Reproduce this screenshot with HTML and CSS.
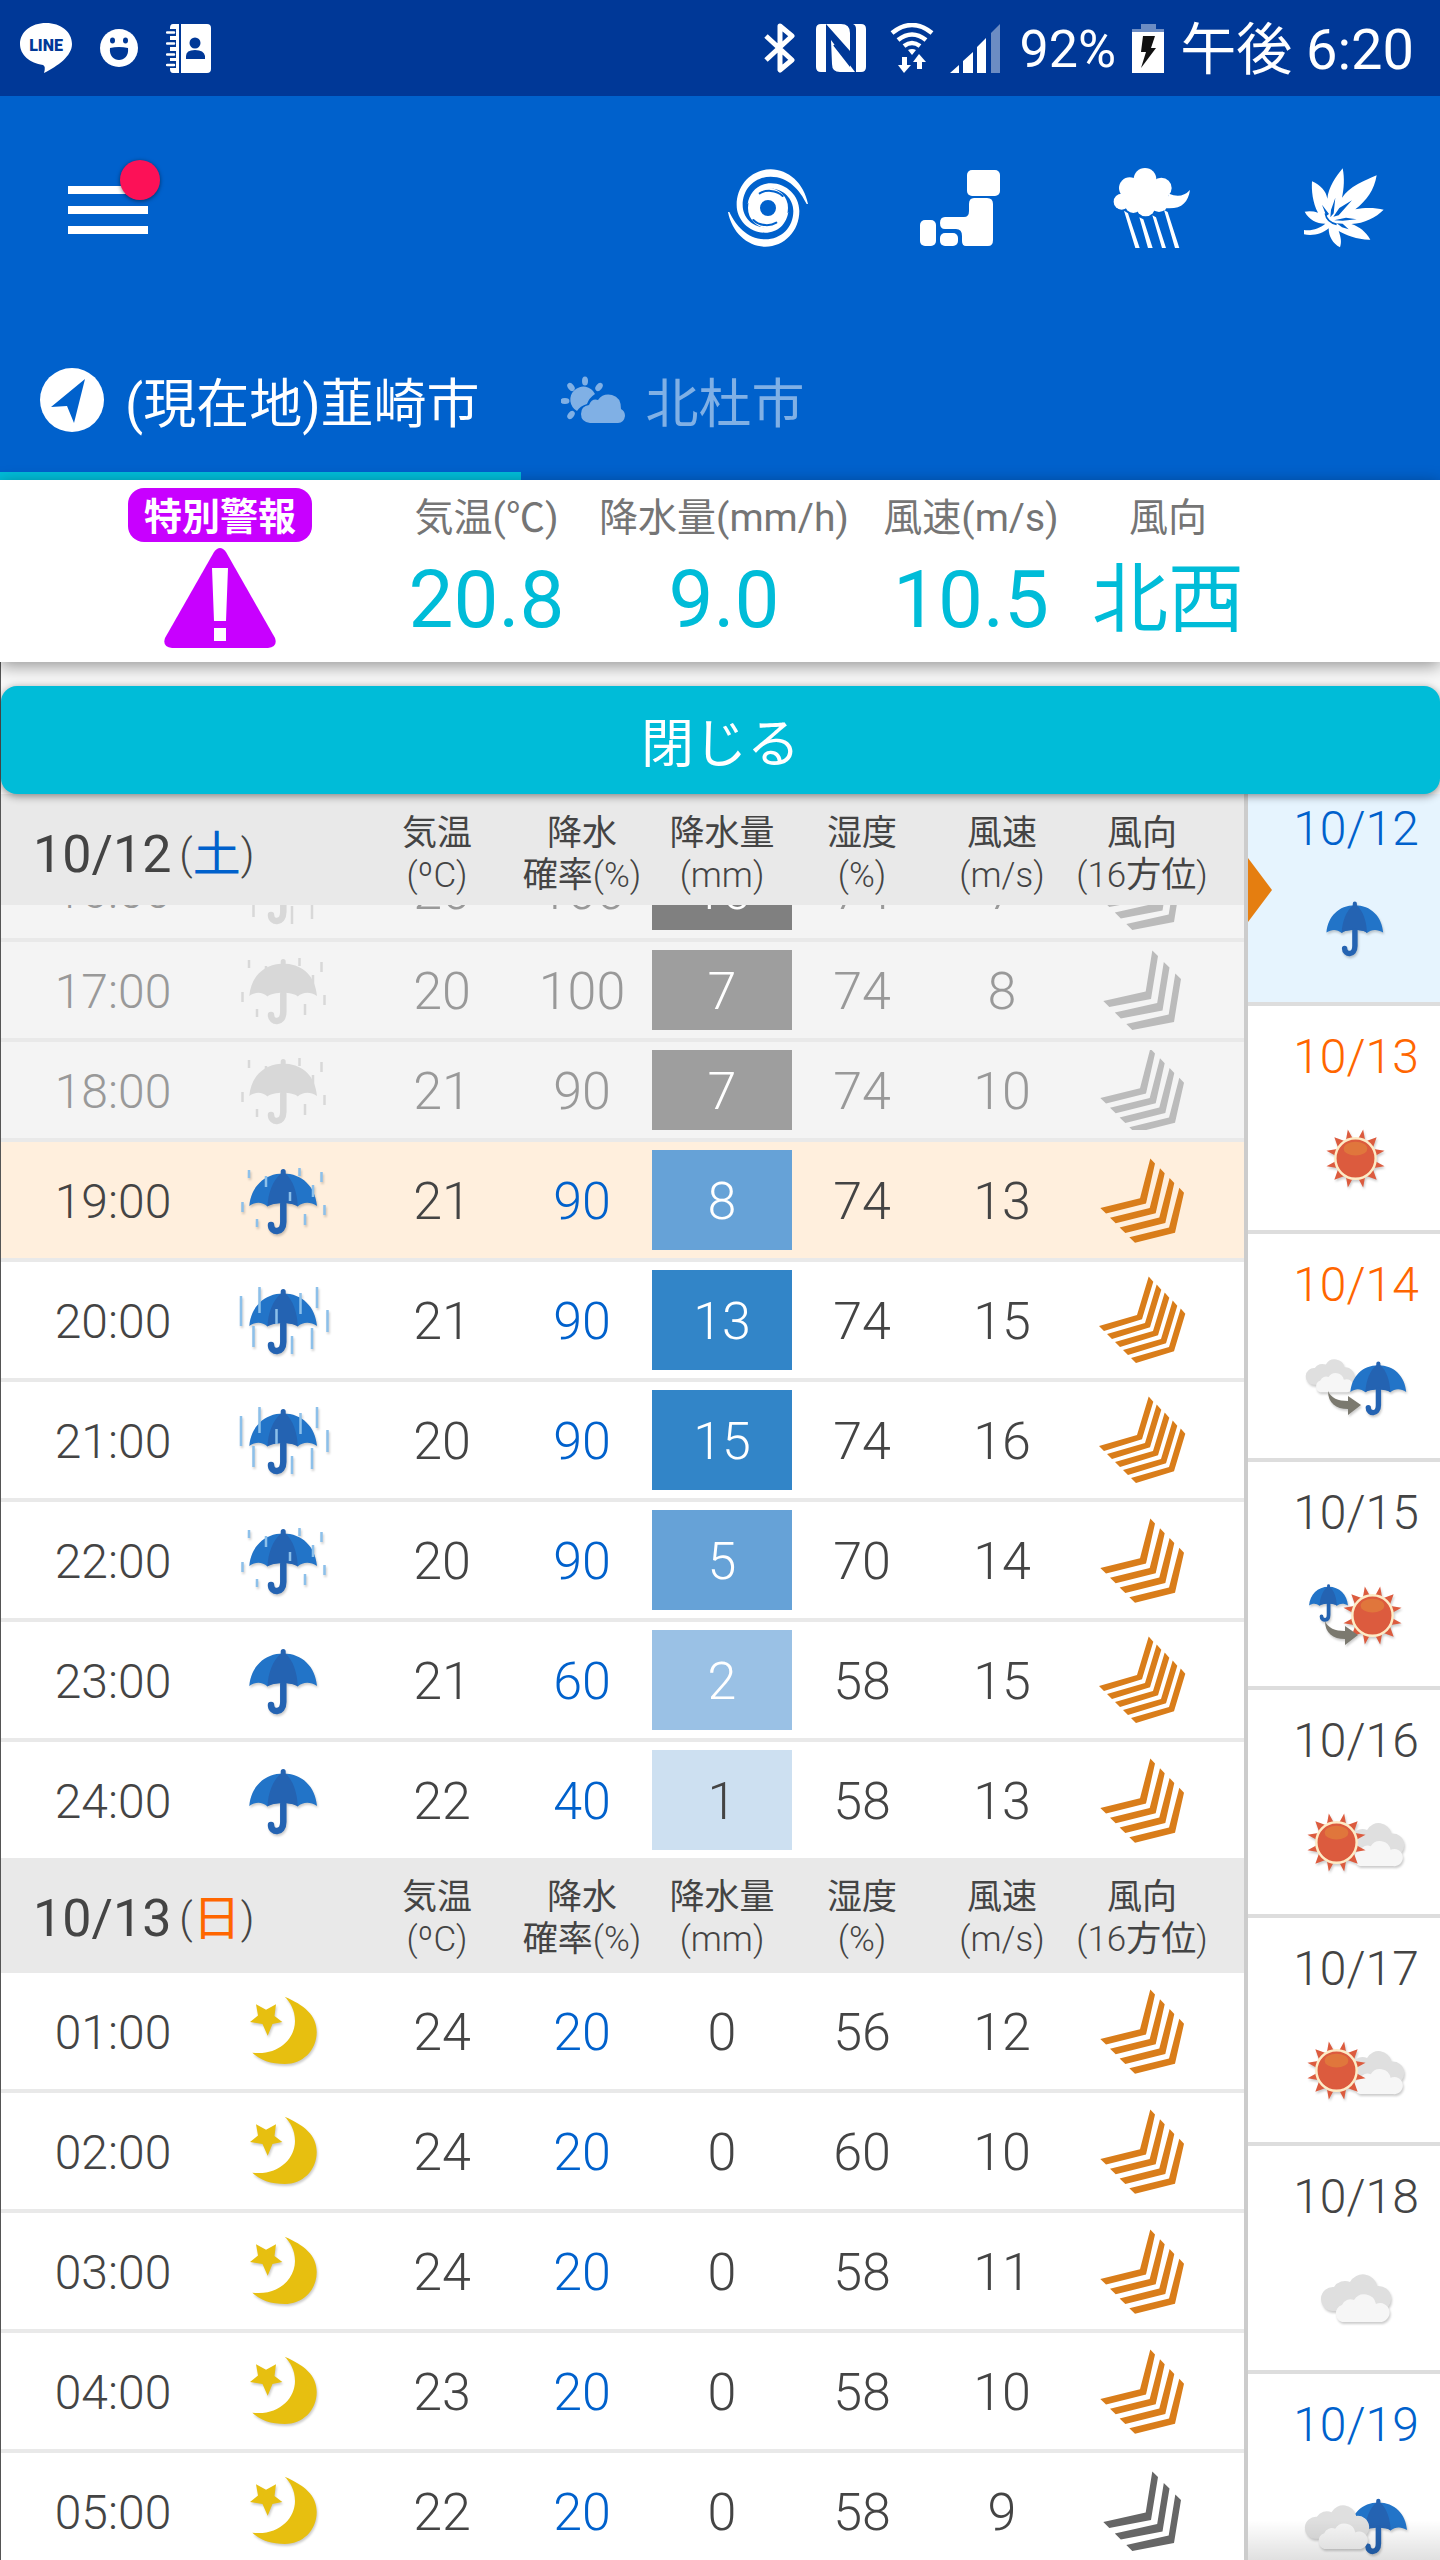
FILE: index.html
```html
<!DOCTYPE html>
<html lang="ja">
<head>
<meta charset="utf-8">
<meta name="viewport" content="width=device-width, initial-scale=1">
<title>韮崎市の天気</title>
<link rel="stylesheet" href="styles.css">
</head>
<body>
<svg class="sprite" aria-hidden="true">
  <symbol id="umbrella" viewBox="0 0 80 80" overflow="visible">
    <path fill="#2274c8" d="M5.300 46C7 27 20 13.500 39.200 13.500S71.500 27 73 46C66 41.500 59 42 53.700 46.500C49 41.500 29 41.500 23.500 46.500C18 42 12 41.500 5.300 46Z"/>
    <path fill="#2463b2" d="M23.500 46.500C24 33 29 20 36.700 13.700V11.500a2.500 2.500 0 0 1 5 0V13.700C49 20 53.500 33 53.700 46.500C49 42 29 42 23.500 46.500Z"/>
    <path fill="none" stroke="#2463b2" stroke-width="6.500" stroke-linecap="round" d="M39.300 44V62C39.300 74 27 73 27 65"/>
  </symbol>
  <symbol id="umbrella-past" viewBox="0 0 80 80" overflow="visible">
    <path fill="#d8d8d8" d="M5.300 46C7 27 19 15 36.700 13.700V11.500a2.500 2.500 0 0 1 5 0V13.700C60 15 71.500 27 73 46C66 41.500 59 42 53.700 46.500C49 41.500 29 41.500 23.500 46.500C18 42 12 41.500 5.300 46Z"/>
    <path fill="none" stroke="#d8d8d8" stroke-width="6.500" stroke-linecap="round" d="M39.300 44V62C39.300 74 27 73 27 65"/>
  </symbol>
  <symbol id="drops" viewBox="0 0 80 80" overflow="visible">
    <path fill="none" stroke="currentColor" stroke-width="2.500" d="M5 10v8M22 16v11M55.500 8v8M77.500 12v10M69 25v12M46 32v9M-1.500 42v10M80.500 45v10M13 59v8M61 54v11"/>
  </symbol>
  <symbol id="downpour" viewBox="0 0 80 80" overflow="visible">
    <path fill="none" stroke="currentColor" stroke-width="2.500" d="M-3 16v30M15.500 7v26M56.500 13v21M73 7v21M83.500 30v22M32.500 29v15M9.500 46v21M68 48v21M48 56v18"/>
  </symbol>
  <symbol id="moon" viewBox="0 0 80 80">
    <path fill="#e7bf10" d="M12 13.300L22 18.700L32 13.300L30.500 25L38.300 31L28.500 33L23.700 44.700L18.500 33L6 31L14 24.500Z"/>
    <path fill="#e7bf10" d="M40.700 5.700C60 14 72.700 24 72.700 41C72.700 60 58 73 41 73C27 73 16 69 8.300 61.700C34 65 51 48 51 30C51 19 46 11 40.700 5.700Z"/>
  </symbol>
  <symbol id="sun" viewBox="-31 -31 62 62">
    <path fill="#dc5b3e" d="M7.800-29.500L10-17H1ZM21.500-21.500L17-9L9-17ZM29.500-7.800L17-1V-10ZM29.500 7.800L17 10V1ZM21.500 21.500L9 17L17 9ZM7.800 29.500L1 17H10ZM-7.800 29.500L-10 17H-1ZM-21.500 21.500L-17 9L-9 17ZM-29.500 7.800L-17 1V10ZM-29.500-7.800L-17-10V-1ZM-21.500-21.500L-9-17L-17-9ZM-7.800-29.500L-1-17H-10Z"/>
    <circle r="20.500" fill="#dc5b3e" stroke="#fdebc6" stroke-width="2.500"/>
    <ellipse cy="-10" rx="12" ry="7" fill="#e0763c"/>
  </symbol>
  <symbol id="cloud" viewBox="0 0 72 52">
    <path fill="#dfdfdf" d="M12 40A12 12 0 1 1 14 16A13 13 0 0 1 30 11A14.500 14.500 0 0 1 57 15A12.500 12.500 0 1 1 60 40Z"/>
    <path fill="#f6f6f6" d="M22 51A9 9 0 0 1 22 34A9 9 0 0 1 34 29A12 12 0 0 1 56 33A9.500 9.500 0 1 1 59 51Z"/>
  </symbol>
  <symbol id="then" viewBox="0 0 34 26" overflow="visible">
    <path fill="#7b796f" d="M0 0C3 7 10 10 20 10V5L33 14L20 24V18C8 18 0 12 0 0Z"/>
  </symbol>
  <symbol id="wind3" viewBox="0 8 88 100" preserveAspectRatio="xMidYMid slice">
    <path id="w3" d="M54.300 18.400L60 24L53 67L11.300 75L5.300 69L47.700 59.500Z"/>
    <use href="#w3" x="11.500" y="11.500"/><use href="#w3" x="23" y="23"/>
  </symbol>
  <symbol id="wind4" viewBox="0 8 88 100" preserveAspectRatio="xMidYMid slice">
    <path id="w4" d="M52.300 16.600L57 21.600L48 61.600L8 71.600L2.300 66L42 56.200Z"/>
    <use href="#w4" x="9.700" y="9.700"/><use href="#w4" x="19.300" y="19.400"/><use href="#w4" x="29" y="29.200"/>
  </symbol>
  <symbol id="wind5" viewBox="0 8 88 100" preserveAspectRatio="xMidYMid slice">
    <path id="w5" d="M50.700 14.400L55.300 19.800L44 57.300L6 69L1 64L39 53Z"/>
    <use href="#w5" x="8" y="8"/><use href="#w5" x="16" y="16"/><use href="#w5" x="24" y="24"/><use href="#w5" x="32" y="32"/>
  </symbol>
</svg>

<div class="app">
  <div class="status">
    <div class="status-group">
      <svg width="52" height="50" viewBox="0 0 52 50"><path fill="#fff" d="M26 0C11 0 0 9 0 21C0 32 10 40 23 42Q26 43 24 50C38 43 52 33 52 21C52 9 41 0 26 0Z"/><text x="26" y="28" class="line-text">LINE</text></svg>
      <svg width="38" height="38" viewBox="0 0 38 38"><circle cx="19" cy="19" r="19" fill="#fff"/><g fill="#003897"><ellipse cx="12.500" cy="11.500" rx="2.500" ry="3"/><ellipse cx="25.500" cy="11.500" rx="2.500" ry="3"/><path d="M10 19Q19 17 28 19C29 27 24 31 19 31S9 27 10 19Z"/></g></svg>
      <svg width="45" height="49" viewBox="0 0 45 49"><path fill="#fff" d="M7 0H13V49H7Q4 49 4 45V4Q4 0 7 0ZM15 0H41Q45 0 45 4V45Q45 49 41 49H15Z"/><g fill="#003897"><path d="M3 5h7v7H3zM3 16h7v7H3zM3 27h7v7H3zM3 37h7v7H3z"/><circle cx="29" cy="19" r="5.500"/><path d="M20 35V32Q20 26 29 26T39 32V35Z"/></g><path stroke="#fff" stroke-width="2.500" stroke-linecap="round" d="M1 8.500h7M1 19.500h7M1 30.500h7M1 41h7"/></svg>
    </div>
    <div class="status-group status-right">
      <svg width="32" height="50" viewBox="0 0 32 50"><path fill="none" stroke="#fff" stroke-width="5" stroke-linejoin="round" d="M2 13L28 37L16 47V3L28 13L2 37"/></svg>
      <svg width="50" height="50" viewBox="0 0 50 50"><path fill="#fff" d="M5 1H25Q34 1 34 10V28L10 1V49H5Q0 49 0 44V6Q0 1 5 1ZM37 1H45Q50 1 50 6V44Q50 49 45 49H40V6Q40 2 37 1ZM15 17L39 49H24Q16 49 16 41Z"/><path stroke="#003897" stroke-width="2" fill="none" d="M18 22L33 41V32L17 15"/></svg>
      <svg class="wifi" width="44" height="50" viewBox="0 0 44 50"><g fill="none" stroke="#fff" stroke-width="4.500"><path d="M2 10Q22-6 42 10M8 17Q22 6 36 17M14 23Q22 17 30 23"/></g><path fill="#fff" d="M18 27Q22 25 26 27L22 32ZM12 34h5v8h4l-7 8l-6-8h4ZM27 46h5v-7h4l-7-8l-6 8h4Z"/></svg>
      <svg width="50" height="49" viewBox="0 0 50 49"><path fill="#fff" d="M0 49L9 41V49ZM13 37L23 28V49H13ZM27 23L36 14V49H27Z"/><path fill="#6c8cc3" d="M41 9L50 0V49H41Z"/></svg>
      <span class="level">92%</span>
      <svg class="battery" width="32" height="49" viewBox="0 0 32 49"><path fill="#6c8cc3" d="M9 0h15v5h8v4H0V5h9z"/><path fill="#fff" d="M0 8h32v41H0z"/><path fill="#111" d="M11 12H23L19 24H24L9 44L14 28H9Z"/></svg>
      <span class="clock">午後 6:20</span>
    </div>
  </div>

  <header class="header">
    <div class="toolbar">
      <button class="icon-btn menu" aria-label="メニュー"><i></i><i></i><i></i><b class="dot"></b></button>
      <button class="icon-btn push" aria-label="台風"><svg width="80" height="80" viewBox="24 24 240 240">
        <circle cx="144" cy="144" r="42" fill="none" stroke="#fff" stroke-width="36"/>
        <g id="arm"><path fill="#fff" d="M264 132C252 70 205 28 152 28C95 28 50 75 50 135C50 180 88 218 135 218C175 218 200 190 205 155L192 172C180 193 160 202 135 202C98 202 68 172 68 135C68 85 105 50 152 50C205 50 240 90 260 132Z"/>
        <path fill="none" stroke="#0061cc" stroke-width="6" stroke-linecap="round" d="M119 100C135 90 168 88 188 108"/></g>
        <use href="#arm" transform="rotate(180 144 144)"/></svg></button>
      <button class="icon-btn" aria-label="地震"><svg width="80" height="80" viewBox="0 0 80 80"><g fill="#fff"><rect x="47" y="2" width="33" height="26" rx="5"/><rect y="52" width="16" height="26" rx="5"/><rect x="20" y="65" width="18" height="13" rx="5"/><path d="M49 36Q49 30 54 30H67Q73 30 73 36V72Q73 78 68 78H46Q42 78 42 73V68Q42 61 36 61H25Q20 61 20 55T25 49H44Q49 49 49 43Z"/></g></svg></button>
      <button class="icon-btn" aria-label="大雨"><svg width="80" height="80" viewBox="24 24 240 240"><g fill="#fff"><circle cx="123" cy="58" r="34"/><circle cx="77" cy="84" r="32"/><circle cx="172" cy="84" r="31"/><circle cx="53" cy="125" r="24"/><ellipse cx="123" cy="112" rx="70" ry="42"/><circle cx="88" cy="134" r="25"/><circle cx="125" cy="140" r="29"/><circle cx="165" cy="128" r="28"/><path d="M195 101Q232 118 258 90C252 130 230 150 180 144ZM60 152L72 160L107 264H94ZM106 172L118 178L146 264H132ZM145 166L156 172L186 264H174ZM180 150L191 156L226 264H213Z"/></g></svg></button>
      <button class="icon-btn" aria-label="紅葉"><svg width="80" height="80" viewBox="24 24 240 240"><path fill="#fff" d="M24 210C50 213 70 205 88 191C60 190 40 180 26 155Q48 152 66 158C50 130 46 90 48 64C74 76 90 92 94 116C98 80 120 50 140 25C146 55 144 85 138 113C160 80 205 62 242 46C235 90 212 122 178 148C210 142 240 144 263 149C240 172 205 190 166 192C190 200 210 215 223 239C185 240 150 225 128 213C134 230 138 245 132 262C110 250 98 230 98 205C80 222 50 228 24 223Z"/><path fill="#0061cc" d="M91 168L78 134L99 162ZM103 172L105 150L118 113L113 160ZM112 170L130 144L168 121L128 166ZM114 181L150 173L182 178L140 182ZM122 190L140 191L158 208L138 202Z"/><path fill="none" stroke="#0061cc" stroke-width="5" d="M88 160Q92 186 122 193"/></svg></button>
    </div>
    <nav class="tabs">
      <a href="#nirasaki" class="tab active"><svg width="64" height="64" viewBox="0 0 64 64"><circle cx="32" cy="32" r="32" fill="#fff"/><path fill="#0061cc" d="M45 11L34 55L27 38L11 39Z"/></svg>(現在地)韮崎市</a>
      <a href="#hokuto" class="tab"><svg width="64" height="48" viewBox="0 0 64 48"><g fill="#80b0e5"><path d="M16 35A13 13 0 1 1 34 18Q28 22 26 28Q19 30 16 35Z"/><ellipse cx="24" cy="5" rx="3" ry="4.500"/><ellipse cx="4" cy="25" rx="4.500" ry="3"/><ellipse cx="10" cy="11" rx="3" ry="4.500" transform="rotate(-40 10 11)"/><ellipse cx="38" cy="11" rx="3" ry="4.500" transform="rotate(40 38 11)"/><ellipse cx="10" cy="39" rx="3" ry="4.500" transform="rotate(40 10 39)"/><path d="M29 47Q20 46 20 38T28 29Q31 22 37 24Q42 17 51 19Q60 21 60 33Q64 35 64 40Q63 47 57 47Z"/></g></svg>北杜市</a>
    </nav>
  </header>

  <section class="now">
    <div class="alert"><span class="alert-badge">特別警報</span><svg width="112" height="100" viewBox="0 0 112 100"><path fill="#c800ff" d="M50 4Q56-4 62 4L111 90Q114 99 104 100H8Q-2 99 1 90Z"/><path fill="#fff" d="M48 20H64L62 73H50ZM50 80H62V93H50Z"/></svg></div>
    <dl><dt>気温(℃)</dt><dd>20.8</dd></dl>
    <dl><dt>降水量(mm/h)</dt><dd>9.0</dd></dl>
    <dl><dt>風速(m/s)</dt><dd>10.5</dd></dl>
    <dl><dt>風向</dt><dd class="kanji">北西</dd></dl>
  </section>

  <main class="content">
    <button class="close">閉じる</button>
    <div class="board">
      <div class="hours">
        <table>
          <thead><tr><th class="date">10/12<span class="paren">(</span><span class="day sat">土</span><span class="paren">)</span></th><th><b>気温</b><br>(ºC)</th><th><b>降水</b><br><b>確率</b>(%)</th><th><b>降水量</b><br>(mm)</th><th><b>湿度</b><br>(%)</th><th><b>風速</b><br>(m/s)</th><th><b>風向</b><br>(16<b>方位</b>)</th></tr></thead>
          <tbody>
            <tr class="past cut"><td class="time">16:00</td><td class="sky"><svg><use href="#umbrella-past"/><use href="#downpour"/></svg></td><td>20</td><td class="prob">100</td><td class="rain r5"><span>16</span></td><td>74</td><td>7</td><td class="wind"><svg><use href="#wind3"/></svg></td></tr>
            <tr class="past"><td class="time">17:00</td><td class="sky"><svg><use href="#umbrella-past"/><use href="#drops"/></svg></td><td>20</td><td class="prob">100</td><td class="rain r3"><span>7</span></td><td>74</td><td>8</td><td class="wind"><svg><use href="#wind3"/></svg></td></tr>
            <tr class="past"><td class="time">18:00</td><td class="sky"><svg><use href="#umbrella-past"/><use href="#drops"/></svg></td><td>21</td><td class="prob">90</td><td class="rain r3"><span>7</span></td><td>74</td><td>10</td><td class="wind"><svg><use href="#wind4"/></svg></td></tr>
            <tr class="current"><td class="time">19:00</td><td class="sky"><svg><use href="#umbrella"/><use href="#drops"/></svg></td><td>21</td><td class="prob">90</td><td class="rain r3"><span>8</span></td><td>74</td><td>13</td><td class="wind strong"><svg><use href="#wind4"/></svg></td></tr>
            <tr><td class="time">20:00</td><td class="sky"><svg><use href="#umbrella"/><use href="#downpour"/></svg></td><td>21</td><td class="prob">90</td><td class="rain r4"><span>13</span></td><td>74</td><td>15</td><td class="wind strong"><svg><use href="#wind5"/></svg></td></tr>
            <tr><td class="time">21:00</td><td class="sky"><svg><use href="#umbrella"/><use href="#downpour"/></svg></td><td>20</td><td class="prob">90</td><td class="rain r4"><span>15</span></td><td>74</td><td>16</td><td class="wind strong"><svg><use href="#wind5"/></svg></td></tr>
            <tr><td class="time">22:00</td><td class="sky"><svg><use href="#umbrella"/><use href="#drops"/></svg></td><td>20</td><td class="prob">90</td><td class="rain r3"><span>5</span></td><td>70</td><td>14</td><td class="wind strong"><svg><use href="#wind4"/></svg></td></tr>
            <tr><td class="time">23:00</td><td class="sky"><svg><use href="#umbrella"/></svg></td><td>21</td><td class="prob">60</td><td class="rain r2"><span>2</span></td><td>58</td><td>15</td><td class="wind strong"><svg><use href="#wind5"/></svg></td></tr>
            <tr><td class="time">24:00</td><td class="sky"><svg><use href="#umbrella"/></svg></td><td>22</td><td class="prob">40</td><td class="rain r1"><span>1</span></td><td>58</td><td>13</td><td class="wind strong"><svg><use href="#wind4"/></svg></td></tr>
          </tbody>
        </table>
        <table>
          <thead><tr><th class="date">10/13<span class="paren">(</span><span class="day sun">日</span><span class="paren">)</span></th><th><b>気温</b><br>(ºC)</th><th><b>降水</b><br><b>確率</b>(%)</th><th><b>降水量</b><br>(mm)</th><th><b>湿度</b><br>(%)</th><th><b>風速</b><br>(m/s)</th><th><b>風向</b><br>(16<b>方位</b>)</th></tr></thead>
          <tbody>
            <tr><td class="time">01:00</td><td class="sky"><svg><use href="#moon"/></svg></td><td>24</td><td class="prob">20</td><td class="rain"><span>0</span></td><td>56</td><td>12</td><td class="wind strong"><svg><use href="#wind4"/></svg></td></tr>
            <tr><td class="time">02:00</td><td class="sky"><svg><use href="#moon"/></svg></td><td>24</td><td class="prob">20</td><td class="rain"><span>0</span></td><td>60</td><td>10</td><td class="wind strong"><svg><use href="#wind4"/></svg></td></tr>
            <tr><td class="time">03:00</td><td class="sky"><svg><use href="#moon"/></svg></td><td>24</td><td class="prob">20</td><td class="rain"><span>0</span></td><td>58</td><td>11</td><td class="wind strong"><svg><use href="#wind4"/></svg></td></tr>
            <tr><td class="time">04:00</td><td class="sky"><svg><use href="#moon"/></svg></td><td>23</td><td class="prob">20</td><td class="rain"><span>0</span></td><td>58</td><td>10</td><td class="wind strong"><svg><use href="#wind4"/></svg></td></tr>
            <tr><td class="time">05:00</td><td class="sky"><svg><use href="#moon"/></svg></td><td>22</td><td class="prob">20</td><td class="rain"><span>0</span></td><td>58</td><td>9</td><td class="wind"><svg><use href="#wind3"/></svg></td></tr>
          </tbody>
        </table>
      </div>
      <nav class="days">
        <a href="#d12" class="sat selected">10/12<svg viewBox="0 0 112 70"><use href="#umbrella" x="22" y="-1" width="67" height="67"/></svg></a>
        <a href="#d13" class="sun">10/13<svg viewBox="0 0 112 70"><use href="#sun" x="25" y="5" width="61" height="61"/></svg></a>
        <a href="#d14" class="sun">10/14<svg viewBox="0 0 112 70"><use href="#cloud" x="5" y="6" width="50" height="36"/><use href="#then" x="28" y="40" width="34" height="26"/><use href="#umbrella" x="46" y="3" width="66" height="66"/></svg></a>
        <a href="#d15">10/15<svg viewBox="0 0 112 70"><use href="#umbrella" x="6" y="0" width="46" height="46"/><use href="#sun" x="42" y="6" width="61" height="61"/><use href="#then" x="25" y="42" width="34" height="26"/></svg></a>
        <a href="#d16">10/16<svg viewBox="0 0 112 70"><use href="#cloud" x="40" y="13" width="65" height="47"/><use href="#sun" x="6" y="5" width="61" height="61"/></svg></a>
        <a href="#d17">10/17<svg viewBox="0 0 112 70"><use href="#cloud" x="40" y="13" width="65" height="47"/><use href="#sun" x="6" y="5" width="61" height="61"/></svg></a>
        <a href="#d18">10/18<svg viewBox="0 0 112 70"><use href="#cloud" x="20" y="8" width="72" height="52"/></svg></a>
        <a href="#d19" class="sat">10/19<svg viewBox="0 0 112 70"><use href="#umbrella" x="45" y="0" width="68" height="68"/><use href="#cloud" x="4" y="11" width="66" height="48"/></svg></a>
      </nav>
    </div>
  </main>
</div>
</body>
</html>
```
FILE: styles.css
```css
* { box-sizing: border-box; }

body {
  margin: 0;
  font-family: Roboto, "Noto Sans CJK JP", sans-serif;
  color: #444;
  background: #fff;
}

button { font: inherit; border: 0; padding: 0; background: none; cursor: pointer; }
a { color: inherit; text-decoration: none; }
svg { display: block; flex: none; }
.sprite { position: absolute; width: 0; height: 0; }

.app {
  display: flex;
  flex-direction: column;
  height: 100vh;
  overflow: hidden;
}

/* Status bar */
.status {
  display: flex;
  flex: none;
  justify-content: space-between;
  align-items: center;
  height: 96px;
  padding: 0 26px 0 20px;
  background: #003897;
  color: #fff;
  line-height: 64px;
}
.status-group { display: flex; align-items: center; gap: 28px; }
.status-right { gap: 20px; }
.status span { padding-top: 4px; }
.level { font-size: 52px; }
.clock { font-size: 56px; }
.wifi { margin: 0 -4px 0 4px; }
.battery { margin: 0 -4px; }
.line-text { font-size: 16px; font-weight: 900; fill: #003897; text-anchor: middle; }

/* App header */
.header { flex: none; background: #0061cc; color: #fff; }
.toolbar {
  display: flex;
  align-items: center;
  gap: 112px;
  height: 240px;
  padding: 0 56px 16px 68px;
}
.icon-btn { position: relative; display: block; width: 80px; }
.push { margin-left: auto; }
.menu { display: flex; flex-direction: column; gap: 12px; padding-top: 4px; }
.menu i { width: 80px; height: 8px; background: #fff; }
.dot {
  position: absolute;
  top: -22px;
  right: -12px;
  width: 40px;
  height: 40px;
  border-radius: 50%;
  background: #fc1157;
  box-shadow: 0 1px 4px rgba(0, 0, 0, .5);
}
.tabs { display: flex; height: 144px; }
.tab {
  display: flex;
  align-items: center;
  gap: 21px;
  padding: 0 41px 8px 40px;
  border-bottom: 8px solid transparent;
  font-size: 53px;
  color: #80b0e5;
}
.tab.active { border-color: #00bcd8; color: #fff; }

/* Current conditions */
.now {
  position: relative;
  z-index: 2;
  display: grid;
  flex: none;
  grid-template-columns: 350fr 183fr 292fr 202fr 192fr;
  height: 182px;
  padding: 8px 176px 0 45px;
  background: #fff;
  box-shadow: 0 4px 16px rgba(0, 0, 0, .4);
  text-align: center;
  white-space: nowrap;
}
.alert { display: flex; flex-direction: column; align-items: center; gap: 6px; }
.alert-badge {
  height: 54px;
  padding: 2px 16px 0;
  border-radius: 16px;
  background: #c800ff;
  color: #fff;
  font-size: 38px;
  font-weight: 700;
  line-height: 54px;
}
.now dl { margin: 0; display: flex; flex-direction: column; align-items: center; }
.now dt { font-size: 39px; line-height: 60px; color: #757575; }
.now dd { margin: 0; font-size: 80px; line-height: 104px; color: #00bcd8; }
.now .kanji { font-size: 76px; }

/* Forecast */
.content {
  display: flex;
  flex: 1;
  flex-direction: column;
  min-height: 0;
  padding-top: 24px;
  border-left: 1px solid #555;
  background: #f8f8f8;
}
.close {
  position: relative;
  z-index: 1;
  flex: none;
  height: 108px;
  border-radius: 16px;
  background: #00bcd8;
  box-shadow: 0 2px 8px rgba(0, 0, 0, .45);
  color: #fff;
  font-size: 53px;
}
.board { display: flex; flex: 1; min-height: 0; overflow: hidden; }
.hours { flex: 1; min-width: 0; overflow: hidden; background: #fff; }

table, thead, tbody { display: block; }
tr {
  display: grid;
  grid-template-columns: 224fr 147fr repeat(6, 140fr) 32fr;
  align-items: center;
  border-bottom: 4px solid #e9e9e9;
}
th, td { padding: 0; font-weight: 300; text-align: center; white-space: nowrap; }
thead tr {
  grid-template-columns: 361fr 150fr repeat(5, 140fr) 32fr;
  height: 115px;
  padding-top: 10px;
  background: #e9e9e9;
}
table:first-child thead tr { height: 111px; padding-top: 12px; border-bottom-width: 2px; }
th { font-size: 35px; line-height: 42px; }
th b { font-weight: 400; }
.date {
  display: flex;
  align-items: center;
  padding-left: 32px;
  font-size: 52px;
  font-weight: 400;
}
.paren { font-size: 42px; font-weight: 300; }
.paren:first-of-type { margin-left: 8px; }
.day { font-size: 48px; }
.sat { color: #0061cc; }
.sun { color: #ff6600; }

td { padding-top: 4px; font-size: 52px; line-height: 60px; }
tbody tr { height: 120px; }
tbody tr:last-child { border-bottom: 0; height: 116px; }
.time { font-size: 48px; }
.sky { padding: 0 30px 0 0; filter: drop-shadow(1px 2px 1px rgba(0, 0, 0, .2)); }
.sky svg { width: 80px; height: 80px; margin: 0 auto; overflow: visible; color: #8cc0ea; }
.prob { color: #0061cc; }
.rain { padding: 0; }
.rain span { display: block; padding-top: 4px; line-height: 96px; }
.r1 { background: #cde0f1; }
.r2 { background: #9ac1e5; color: #fff; }
.r3 { background: #66a2d7; color: #fff; }
.r4 { background: #3285c8; color: #fff; }
.r5 { background: #1f6bb0; color: #fff; }
.wind { padding: 0; }
.wind svg { width: 88px; height: 100px; margin: 0 auto; fill: #666; }
.wind.strong svg { fill: #d97d1a; }

.current { background: #ffefdd; }
tr.past { height: 100px; background: #f4f4f4; color: #999; }
.past .prob { color: #999; }
.past .sky { filter: none; }
.past .sky svg { color: #d8d8d8; }
.past .rain span { line-height: 76px; }
.past .r3 { background: #9e9e9e; }
.past .r5 { background: #808080; }
.past .wind svg { height: 80px; fill: #bbb; }
/* The row that is scrolled halfway under the sticky heading */
tr.cut { height: 37px; align-content: end; overflow: hidden; padding-bottom: 8px; }

/* Day picker */
.days {
  position: relative;
  flex: none;
  width: 196px;
  border-left: 4px solid #ccc;
  overflow: hidden;
  background: #fff;
}
.days a {
  display: flex;
  flex-direction: column;
  align-items: center;
  gap: 36px;
  height: 228px;
  padding: 21px 0 0 24px;
  border-bottom: 4px solid #ddd;
  font-size: 48px;
  font-weight: 300;
  line-height: 60px;
}
.days a:first-child { margin-top: -16px; }
.days svg { width: 112px; height: 70px; filter: drop-shadow(1px 2px 1px rgba(0, 0, 0, .2)); }
.selected { background: #e6f4fe; }
.days::before {
  content: "";
  position: absolute;
  top: 64px;
  left: 0;
  width: 24px;
  height: 64px;
  background: #e57e10;
  clip-path: polygon(0 0, 100% 50%, 0 100%);
}
.days::after {
  content: "";
  position: absolute;
  inset: auto 0 0;
  height: 40px;
  background: linear-gradient(transparent, rgba(0, 0, 0, .12));
}
```
